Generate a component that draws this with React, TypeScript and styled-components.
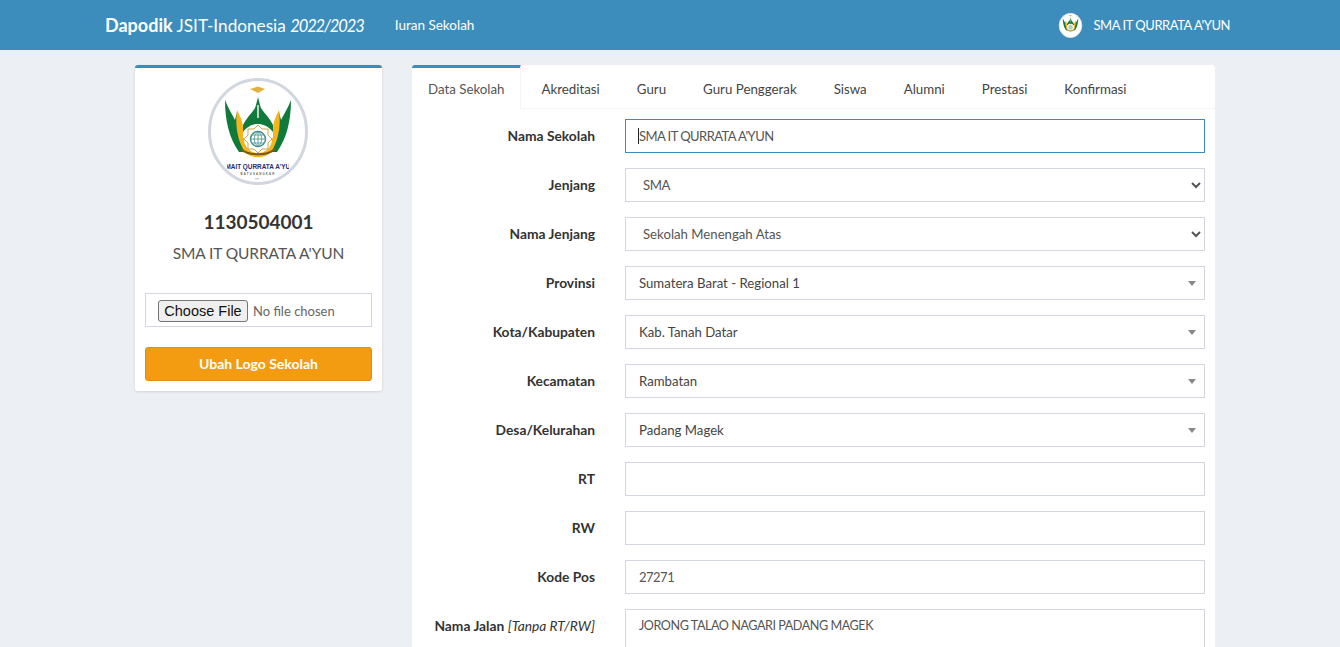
import React from 'react';
import styled, { createGlobalStyle } from 'styled-components';

const GlobalStyle = createGlobalStyle`
  html, body {
    margin: 0;
    height: 100%;
    overflow: hidden;
    background: #ecf0f5;
  }
  body {
    font-family: Lato, "Liberation Sans", sans-serif;
    font-size: 14px;
    color: #333;
  }
  * {
    box-sizing: border-box;
  }
`;

const Logo: React.FC<{ small?: boolean }> = ({ small }) => (
  <svg viewBox="0 0 100 107" width="100%" height="100%">
    <defs>
      <clipPath id="logo-text">
        <rect x="19" y="80" width="62" height="20" />
      </clipPath>
    </defs>
    <ellipse cx="50" cy="53.5" rx="48.5" ry="52" fill="#fff" stroke={small ? '#e4e7ec' : '#d2d6de'} strokeWidth="3" />
    <path d="M42 11 L50 8.5 L57 11 L50 15 Z" fill="#e3b23c" />
    <path d="M17 22 C17 42 21 60 31 74 L37 74 C31 62 29 50 29 34 L27 42 C24 36 20 30 17 22 Z" fill="#0f7a3a" />
    <path d="M83 22 C83 42 79 60 69 74 L63 74 C69 62 71 50 71 34 L73 42 C76 36 80 30 83 22 Z" fill="#0f7a3a" />
    <path d="M29 32 C27 46 29 62 37 74 C43 81 57 81 63 74 C71 62 73 46 71 32 C68 38 65 44 65 50 L65 60 L35 60 L35 50 C35 44 32 38 29 32 Z" fill="#f4b41a" />
    <path d="M50 19 L52 27 C53 33 60 37 65 47 L65 54 C60 48 55 46 50 46 C45 46 40 48 35 54 L35 47 C40 37 47 33 48 27 Z" fill="#0f7a3a" />
    <rect x="49.3" y="27" width="1.4" height="13" fill="#fff" />
    <ellipse cx="50" cy="61" rx="14" ry="14" fill="#fff" />
    <path d="M50 47 L54 51 L60 51 L60 57 L64 61 L60 65 L60 71 L54 71 L50 75 L46 71 L40 71 L40 65 L36 61 L40 57 L40 51 L46 51 Z" fill="none" stroke="#c9a94b" strokeWidth="1" />
    <circle cx="50" cy="61" r="7.5" fill="#fff" stroke="#3f8f88" strokeWidth="1.4" />
    <path d="M42.5 61 H57.5 M50 53.5 V68.5 M44 57 H56 M44 65 H56 M50 53.5 C45 57 45 65 50 68.5 M50 53.5 C55 57 55 65 50 68.5" fill="none" stroke="#3f8f88" strokeWidth="0.8" />
    <path d="M33 71 C40 78 60 78 67 71" fill="none" stroke="#7a5b12" strokeWidth="2" />
    {!small && (
      <>
        <text x="50" y="91" textAnchor="middle" clipPath="url(#logo-text)" fontFamily="Liberation Sans, sans-serif" fontWeight="700" fontSize="6.4" fill="#2a2a72">SMAIT QURRATA A'YUN</text>
        <text x="50" y="97" textAnchor="middle" fontFamily="Liberation Sans, sans-serif" fontWeight="700" fontSize="2.8" letterSpacing="1.2" fill="#666">BATUSANGKAR</text>
        <rect x="47" y="100.5" width="4" height="0.7" fill="#999" />
      </>
    )}
  </svg>
);

const Nav = styled.nav`
  height: 50px;
  background: #3c8dbc;
  display: flex;
  align-items: center;
  justify-content: space-between;
  padding: 0 110px 1px 105px;
  color: #fff;
`;

const NavLeft = styled.div`
  display: flex;
  align-items: center;
  gap: 31px;
`;

const Brand = styled.div`
  font-size: 17.2px;
  b {
    font-size: 18px;
    font-weight: 700;
  }
  i {
    font-size: 16.5px;
    font-style: italic;
    letter-spacing: -1.1px;
  }
`;

const NavLink = styled.a`
  font-size: 13.5px;
`;

const School = styled.div`
  display: flex;
  align-items: center;
  gap: 10px;
  font-size: 13px;
  letter-spacing: -0.45px;
`;

const NavLogo = styled.div`
  width: 25px;
  height: 25px;
  margin: 1px 0 0 -1px;
`;

const Content = styled.main`
  display: grid;
  grid-template-columns: 247px 803px;
  gap: 30px;
  align-items: start;
  padding: 15px 0 0 135px;
`;

const Profile = styled.section`
  background: #fff;
  border-top: 3px solid #3c8dbc;
  border-radius: 3px;
  box-shadow: 0 1px 3px rgba(0, 0, 0, 0.12);
  padding: 10px;
  height: 326px;
  display: flex;
  flex-direction: column;
  align-items: center;
`;

const ProfileLogo = styled.div`
  width: 100px;
  height: 107px;
  margin-right: 1px;
`;

const SchoolCode = styled.h3`
  margin: 25px 0 0;
  font-size: 19px;
  line-height: 24px;
  font-weight: 700;
  color: #333;
`;

const SchoolName = styled.p`
  margin: 7px 0 0;
  font-size: 15.5px;
  letter-spacing: -0.1px;
  line-height: 24px;
  color: #555;
`;

const FileBox = styled.div`
  width: 100%;
  height: 34px;
  margin-top: 28px;
  border: 1px solid #d2d6de;
  display: flex;
  align-items: center;
  padding: 1px 0 0 12px;
  gap: 5px;
  font-size: 13px;
  color: #666;
`;

const ChooseButton = styled.button`
  width: 90px;
  height: 22px;
  padding: 0;
  font-family: "Liberation Sans", Arial, sans-serif;
  font-size: 14.5px;
  color: #111;
  background: #efefef;
  border: 1px solid #767676;
  border-radius: 3px;
`;

const SubmitButton = styled.button`
  width: 100%;
  height: 34px;
  margin-top: 20px;
  padding: 0 0 2px;
  background: #f39c12;
  border: 1px solid #e08e0b;
  border-radius: 3px;
  color: #fff;
  font-family: inherit;
  font-size: 14px;
  font-weight: 700;
`;

const Panel = styled.section`
  background: #fff;
  border-radius: 3px 3px 0 0;
  height: 700px;
`;

const Tabs = styled.div`
  display: flex;
  align-items: flex-start;
  height: 44px;
  border-bottom: 1px solid #f4f4f4;
`;

const Tab = styled.div<{ $active?: boolean }>`
  height: ${({ $active }) => ($active ? '44px' : '43px')};
  padding: ${({ $active }) => ($active ? '0 15px 0 16px' : '1px 15px 0 21px')};
  display: flex;
  align-items: center;
  font-size: 13.3px;
  color: ${({ $active }) => ($active ? '#555' : '#444')};
  background: #fff;
  border-top: 3px solid ${({ $active }) => ($active ? '#3c8dbc' : 'transparent')};
  border-right: 1px solid ${({ $active }) => ($active ? '#f4f4f4' : 'transparent')};
  border-radius: 3px 0 0 0;
`;

const Form = styled.div`
  padding: 10px 10px 0 0;
  display: flex;
  flex-direction: column;
  gap: 15px;
`;

const Row = styled.div<{ $top?: boolean }>`
  display: grid;
  grid-template-columns: 183px 580px;
  column-gap: 30px;
  align-items: ${({ $top }) => ($top ? 'start' : 'center')};
`;

const Label = styled.label<{ $top?: boolean }>`
  text-align: right;
  font-size: 13.8px;
  font-weight: 700;
  color: #333;
  margin-bottom: 2px;
  padding-top: ${({ $top }) => ($top ? '8px' : '0')};
  i {
    font-weight: 400;
    font-style: italic;
  }
`;

const Field = styled.div`
  position: relative;
`;

const Input = styled.input<{ $focus?: boolean; $tracking?: number }>`
  display: block;
  width: 100%;
  height: 34px;
  padding: 0 13px;
  font-family: inherit;
  font-size: 13px;
  letter-spacing: ${({ $tracking }) => $tracking ?? 0}px;
  color: #555;
  background: #fff;
  border: 1px solid ${({ $focus }) => ($focus ? '#3c8dbc' : '#d2d6de')};
  outline: none;
`;

const Caret = styled.span`
  position: absolute;
  left: 13px;
  top: 9px;
  width: 1px;
  height: 16px;
  background: #222;
`;

const Select = styled.select<{ $tracking?: number }>`
  display: block;
  width: 100%;
  height: 34px;
  padding: 0 13px;
  font-family: inherit;
  font-size: 13.2px;
  letter-spacing: ${({ $tracking }) => $tracking ?? 0}px;
  color: #555;
  background: #fff;
  border: 1px solid #d2d6de;
  border-radius: 0;
  outline: none;
`;

const Select2 = styled.div`
  height: 34px;
  padding: 0 13px;
  display: flex;
  align-items: center;
  justify-content: space-between;
  font-size: 13.2px;
  color: #444;
  border: 1px solid #d2d6de;
  &::after {
    content: '';
    margin: 0 -5px 0 0;
    border-style: solid;
    border-width: 5px 4px 0 4px;
    border-color: #888 transparent transparent transparent;
  }
`;

const TextArea = styled.textarea`
  display: block;
  width: 100%;
  height: 70px;
  padding: 8px 13px;
  font-family: inherit;
  font-size: 12.6px;
  letter-spacing: -0.45px;
  color: #555;
  border: 1px solid #d2d6de;
  border-radius: 0;
  resize: none;
  outline: none;
`;

const TABS = ['Data Sekolah', 'Akreditasi', 'Guru', 'Guru Penggerak', 'Siswa', 'Alumni', 'Prestasi', 'Konfirmasi'];

const App: React.FC = () => (
  <>
    <GlobalStyle />
    <Nav>
      <NavLeft>
        <Brand>
          <b>Dapodik</b> JSIT-Indonesia <i>2022/2023</i>
        </Brand>
        <NavLink>Iuran Sekolah</NavLink>
      </NavLeft>
      <School>
        <NavLogo>
          <Logo small />
        </NavLogo>
        SMA IT QURRATA A'YUN
      </School>
    </Nav>
    <Content>
      <Profile>
        <ProfileLogo>
          <Logo />
        </ProfileLogo>
        <SchoolCode>1130504001</SchoolCode>
        <SchoolName>SMA IT QURRATA A'YUN</SchoolName>
        <FileBox>
          <ChooseButton type="button">Choose File</ChooseButton>
          No file chosen
        </FileBox>
        <SubmitButton type="button">Ubah Logo Sekolah</SubmitButton>
      </Profile>
      <Panel>
        <Tabs>
          {TABS.map((t, i) => (
            <Tab key={t} $active={i === 0}>{t}</Tab>
          ))}
        </Tabs>
        <Form>
          <Row>
            <Label>Nama Sekolah</Label>
            <Field>
              <Input $focus $tracking={-0.55} readOnly value="SMA IT QURRATA A'YUN" />
              <Caret />
            </Field>
          </Row>
          <Row>
            <Label>Jenjang</Label>
            <Select $tracking={-0.5} defaultValue="SMA"><option>SMA</option></Select>
          </Row>
          <Row>
            <Label>Nama Jenjang</Label>
            <Select defaultValue="Sekolah Menengah Atas"><option>Sekolah Menengah Atas</option></Select>
          </Row>
          <Row>
            <Label>Provinsi</Label>
            <Select2>Sumatera Barat - Regional 1</Select2>
          </Row>
          <Row>
            <Label>Kota/Kabupaten</Label>
            <Select2>Kab. Tanah Datar</Select2>
          </Row>
          <Row>
            <Label>Kecamatan</Label>
            <Select2>Rambatan</Select2>
          </Row>
          <Row>
            <Label>Desa/Kelurahan</Label>
            <Select2>Padang Magek</Select2>
          </Row>
          <Row>
            <Label>RT</Label>
            <Input readOnly value="" />
          </Row>
          <Row>
            <Label>RW</Label>
            <Input readOnly value="" />
          </Row>
          <Row>
            <Label>Kode Pos</Label>
            <Input $tracking={-0.5} readOnly value="27271" />
          </Row>
          <Row $top>
            <Label $top>Nama Jalan <i>[Tanpa RT/RW]</i></Label>
            <TextArea readOnly value="JORONG TALAO NAGARI PADANG MAGEK" />
          </Row>
        </Form>
      </Panel>
    </Content>
  </>
);

export default App;
